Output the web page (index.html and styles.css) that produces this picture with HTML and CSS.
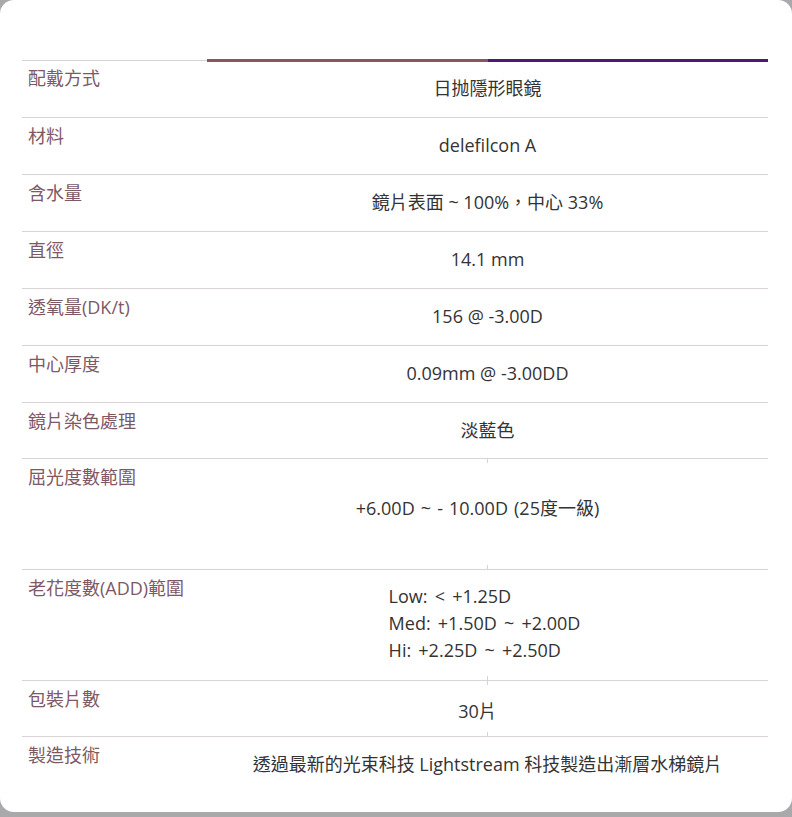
FILE: index.html
```html
<!DOCTYPE html>
<html lang="zh-Hant">
<head>
<meta charset="utf-8">
<title>規格</title>
<link rel="stylesheet" href="styles.css">
</head>
<body>
<div class="card">
  <div class="spec">
    <div class="spec-head">
      <span class="seg seg-plain"></span>
      <span class="seg seg-brown"></span>
      <span class="seg seg-purple"></span>
    </div>
    <div class="row row-first">
      <div class="label">配戴方式</div>
      <div class="value">日抛隱形眼鏡</div>
    </div>
    <div class="row">
      <div class="label">材料</div>
      <div class="value">delefilcon A</div>
    </div>
    <div class="row">
      <div class="label">含水量</div>
      <div class="value">鏡片表面 ~ 100%，中心 33%</div>
    </div>
    <div class="row">
      <div class="label">直徑</div>
      <div class="value">14.1 mm</div>
    </div>
    <div class="row">
      <div class="label">透氧量(DK/t)</div>
      <div class="value">156 @ -3.00D</div>
    </div>
    <div class="row">
      <div class="label">中心厚度</div>
      <div class="value">0.09mm @ -3.00DD</div>
    </div>
    <div class="row row-short">
      <div class="label">鏡片染色處理</div>
      <div class="value">淡藍色</div>
    </div>
    <div class="row">
      <div class="label">屈光度數範圍</div>
      <div class="value value-tall shifted tick-top tick-bottom">+6.00D ~ - 10.00D (25度一級)</div>
    </div>
    <div class="row">
      <div class="label">老花度數(ADD)範圍</div>
      <div class="value value-lines tick-bottom">
        <div class="lines">Low: &lt; +1.25D<br>Med: +1.50D ~ +2.00D<br>Hi: +2.25D ~ +2.50D</div>
      </div>
    </div>
    <div class="row row-pack">
      <div class="label">包裝片數</div>
      <div class="value shifted tick-top tick-bottom">30片</div>
    </div>
    <div class="row row-last">
      <div class="label">製造技術</div>
      <div class="value">透過最新的光束科技 Lightstream 科技製造出漸層水梯鏡片</div>
    </div>
  </div>
</div>
</body>
</html>
```
FILE: styles.css
```css
html, body {
  margin: 0;
  padding: 0;
}
body {
  background: #a9a9ac;
  width: 792px;
  height: 817px;
  overflow: hidden;
  font-family: "Open Sans", "Noto Sans CJK TC", sans-serif;
  font-size: 18px;
  line-height: 27px;
  color: #333333;
}
.card {
  background: #ffffff;
  width: 792px;
  height: 812px;
  border-radius: 14px;
  box-sizing: border-box;
  padding: 59px 24px 0 22px;
}
.spec {
  width: 746px;
}
.spec-head {
  display: flex;
  align-items: center;
  height: 3px;
}
.seg {
  display: block;
}
.seg-plain {
  width: 185px;
  height: 1px;
  background: #d8d1d4;
}
.seg-brown {
  flex: 1;
  height: 3px;
  background: #8a5560;
}
.seg-purple {
  flex: 1;
  height: 3px;
  background: #4a1a6d;
}
.row {
  display: grid;
  grid-template-columns: 185px 1fr;
  border-bottom: 1px solid #dad4d7;
}
.row-last {
  border-bottom: none;
}
.label {
  color: #7d5965;
  padding: 5px 6px;
  font-size: 18px;
}
.row-first .label {
  padding-top: 3px;
}
.value {
  position: relative;
  display: flex;
  align-items: center;
  justify-content: center;
  text-align: center;
  padding: 14px 8px 15px;
}
.row-first .value {
  padding-top: 13px;
}
.row-short .value {
  padding-bottom: 14px;
}
.row-pack .value {
  padding-top: 17px;
  padding-bottom: 11px;
}
.value-tall {
  min-height: 81px;
  padding-top: 9px;
  padding-bottom: 20px;
  word-spacing: 1.4px;
}
.shifted {
  padding-right: 28px;
}
.value-lines {
  padding-right: 14px;
  padding-top: 13px;
  padding-bottom: 16px;
}
.lines {
  text-align: left;
  word-spacing: 2.5px;
}
.tick-top::before,
.tick-bottom::after {
  content: "";
  position: absolute;
  left: 280px;
  width: 1px;
  height: 4px;
  background: #d4d4d4;
}
.tick-top::before {
  top: 0;
}
.tick-bottom::after {
  bottom: 0;
}
```
